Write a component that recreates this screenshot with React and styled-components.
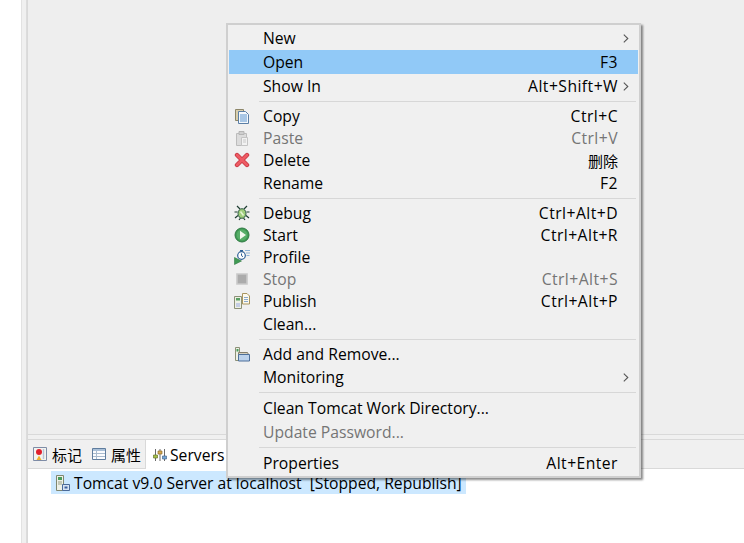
import React from "react";
import styled, { createGlobalStyle } from "styled-components";

const GlobalStyle = createGlobalStyle`
  html, body {
    margin: 0;
    padding: 0;
    background: #fff;
  }
  body {
    font-family: "Open Sans", "Noto Sans CJK SC", sans-serif;
    font-size: 15.7px;
    color: #000;
  }
`;

const Icon = ({ children }) => (
  <svg width="16" height="16" viewBox="0 0 16 16" fill="none">
    {children}
  </svg>
);

const CopyIcon = () => (
  <Icon>
    <path d="M1.5 1.5h8v11h-8z" fill="#d9cfae" stroke="#8d8669" />
    <path d="M4.5 3.5h7l3 3v9h-10z" fill="#f4f8fc" stroke="#5b7fa6" />
    <path d="M6 7h7M6 9h7M6 11h7M6 13h7" stroke="#5d95cf" />
  </Icon>
);

const PasteIcon = () => (
  <Icon>
    <path d="M2.5 3.5h10v12h-10z" fill="#dcdcdc" stroke="#bcbcbc" />
    <path d="M5 1.5h5v3H5z" fill="#cfcfcf" stroke="#b5b5b5" />
    <path d="M7.5 7.5h6v8h-6z" fill="#f2f2f2" stroke="#c4c4c4" />
    <path d="M9 10h3M9 12h3" stroke="#c8c8c8" />
  </Icon>
);

const DeleteIcon = () => (
  <Icon>
    <path d="M3 3l10 10M13 3L3 13" stroke="#c93a45" strokeWidth="4.4" strokeLinecap="round" />
    <path d="M3 3l10 10M13 3L3 13" stroke="#ee5b64" strokeWidth="2.6" strokeLinecap="round" />
  </Icon>
);

const DebugIcon = () => (
  <Icon>
    <path d="M3 1l3 3M13 1l-3 3M0.5 7h3M12.5 7h3M1 13l3-2.5M15 13l-3-2.5M5 15l1.5-2M11 15l-1.5-2" stroke="#1f3d33" strokeWidth="1.2" />
    <ellipse cx="8" cy="8.5" rx="4" ry="4.8" fill="#9fce7c" stroke="#2f5d46" />
    <path d="M6.5 6.5l3 4" stroke="#e3f3d2" strokeWidth="1.6" />
  </Icon>
);

const StartIcon = () => (
  <Icon>
    <circle cx="8" cy="8" r="7" fill="#3f9a53" stroke="#2f7a43" />
    <circle cx="8" cy="8" r="5.4" fill="#57ad68" />
    <path d="M6 3.8L12 8l-6 4.2z" fill="#f2f8ee" />
  </Icon>
);

const ProfileIcon = () => (
  <Icon>
    <path d="M0.5 8.5L7.5 12 0.5 15.5z" fill="#3f9a53" stroke="#2f7a43" strokeWidth="0.6" />
    <circle cx="7.5" cy="6.5" r="3.8" fill="#fff" stroke="#2c5f96" strokeWidth="1.2" />
    <path d="M7.5 4.5v2.2l1.5 1M6 1.5h3" stroke="#2c5f96" />
    <path d="M11 1.5h5M12 4h4M12.5 6.5h3" stroke="#8fb3d6" />
  </Icon>
);

const StopIcon = () => (
  <Icon>
    <path d="M3 3h10v10H3z" fill="#ababab" stroke="#c9c9c9" strokeWidth="1.6" />
  </Icon>
);

const PublishIcon = () => (
  <Icon>
    <path d="M0.5 3.5h7v12h-7z" fill="#eef0e4" stroke="#8c9177" />
    <path d="M2 5h4v2.5H2z" fill="#5aa064" />
    <path d="M2 10h4v4H2z" fill="#c5cde4" />
    <path d="M8.5 0.5h4.5l2.5 2.5v8h-7z" fill="#fdf9ec" stroke="#a8955f" />
    <path d="M10 4.5h4M10 6.5h4M10 8.5h4" stroke="#8aa9cc" />
  </Icon>
);

const AddRemoveIcon = () => (
  <Icon>
    <path d="M1.5 1.5h4v13h-4z" fill="#eef0e4" stroke="#8c9177" />
    <path d="M2.5 3h2v2.5h-2z" fill="#4a9c5c" />
    <path d="M4.5 6.5h9l1 2h-10z" fill="#d5d0c0" stroke="#857f6d" />
    <path d="M4.5 8.5h11v6.5h-11z" fill="#bcd2ec" stroke="#4d6f9a" />
  </Icon>
);

const MarkersIcon = () => (
  <Icon>
    <path d="M1.5 1.5h13v13h-13z" fill="#f3f3ef" stroke="#7e8ca6" />
    <circle cx="7" cy="6" r="3" fill="#e0202c" />
    <path d="M4.5 14L7 9.5 9.5 14z" fill="#f1b22d" />
    <path d="M11.5 3v10" stroke="#b6c4d8" strokeWidth="1.4" />
  </Icon>
);

const PropertiesIcon = () => (
  <Icon>
    <path d="M1.5 2.5h13v11h-13z" fill="#fbfcfe" stroke="#5f7d9e" />
    <path d="M2 3h12v2H2z" fill="#a9c0d8" />
    <path d="M2 7.5h12M2 10.5h12M5.5 5v8" stroke="#a9bbce" />
  </Icon>
);

const ServersIcon = () => (
  <Icon>
    <path d="M3.5 2v12M8 2v12M12.5 2v12" stroke="#6a6a6a" />
    <path d="M1.5 8h4v3h-4z" fill="#a5bf48" stroke="#67762b" strokeWidth="0.7" />
    <path d="M6 4h4v3H6z" fill="#d8a94d" stroke="#8a6c2c" strokeWidth="0.7" />
    <path d="M10.5 9h4v3h-4z" fill="#74a6d8" stroke="#45698f" strokeWidth="0.7" />
  </Icon>
);

const TomcatIcon = () => (
  <Icon>
    <path d="M0.5 0.5h7v15h-7z" fill="#eef0e8" stroke="#80866f" />
    <path d="M2 2h4v3H2z" fill="#4a9c5c" />
    <path d="M2 7h4M2 9h4" stroke="#9aa088" />
    <path d="M6.5 9.5h7v6h-7z" fill="#d7e3f3" stroke="#4a6a9a" />
    <path d="M8.5 11.5h3v2h-3z" fill="#3a5f9e" />
  </Icon>
);

const Chevron = () => (
  <svg width="6" height="9" viewBox="0 0 6 9" fill="none">
    <path d="M0.8 0.6L4.8 4.5 0.8 8.4" stroke="#555" strokeWidth="1.1" />
  </svg>
);

const menuGroups = [
  [
    { label: "New", submenu: true },
    { label: "Open", shortcut: "F3", active: true },
    { label: "Show In", shortcut: "Alt+Shift+W", submenu: true },
  ],
  [
    { label: "Copy", shortcut: "Ctrl+C", icon: CopyIcon },
    { label: "Paste", shortcut: "Ctrl+V", icon: PasteIcon, disabled: true },
    { label: "Delete", shortcut: "删除", icon: DeleteIcon, cjk: true },
    { label: "Rename", shortcut: "F2" },
  ],
  [
    { label: "Debug", shortcut: "Ctrl+Alt+D", icon: DebugIcon },
    { label: "Start", shortcut: "Ctrl+Alt+R", icon: StartIcon },
    { label: "Profile", icon: ProfileIcon },
    { label: "Stop", shortcut: "Ctrl+Alt+S", icon: StopIcon, disabled: true },
    { label: "Publish", shortcut: "Ctrl+Alt+P", icon: PublishIcon },
    { label: "Clean..." },
  ],
  [
    { label: "Add and Remove...", icon: AddRemoveIcon },
    { label: "Monitoring", submenu: true },
  ],
  [
    { label: "Clean Tomcat Work Directory..." },
    { label: "Update Password...", disabled: true },
  ],
  [{ label: "Properties", shortcut: "Alt+Enter" }],
];

export default function App() {
  return (
    <Page>
      <GlobalStyle />
      <Strip />
      <Workbench>
        <EditorArea />
        <ViewPanel>
          <TabBar>
            <InactiveTabs>
              <Tab>
                <MarkersIcon />
                <TabLabel>标记</TabLabel>
              </Tab>
              <Tab>
                <PropertiesIcon />
                <TabLabel>属性</TabLabel>
              </Tab>
            </InactiveTabs>
            <ActiveTab>
              <ServersIcon />
              <span>Servers</span>
            </ActiveTab>
          </TabBar>
          <TreeRow>
            <TomcatIcon />
            <span>Tomcat v9.0 Server at localhost  [Stopped, Republish]</span>
          </TreeRow>
        </ViewPanel>
      </Workbench>

      <Menu>
        {menuGroups.map((group, i) => (
          <React.Fragment key={i}>
            {i > 0 && <Separator />}
            {group.map((item) => (
              <MenuRow
                key={item.label}
                $active={item.active}
                $disabled={item.disabled}
                $hasIcon={!!item.icon}
              >
                <IconSlot>{item.icon && <item.icon />}</IconSlot>
                <Label>{item.label}</Label>
                <Shortcut $cjk={item.cjk}>{item.shortcut}</Shortcut>
                <ArrowSlot>{item.submenu && <Chevron />}</ArrowSlot>
              </MenuRow>
            ))}
          </React.Fragment>
        ))}
      </Menu>
    </Page>
  );
}

const Page = styled.div`
  position: relative;
  width: 744px;
  height: 543px;
  padding-left: 21px;
  box-sizing: border-box;
  display: flex;
  overflow: hidden;
  background: #fff;
`;

const Strip = styled.div`
  width: 6px;
  box-sizing: border-box;
  background: #f0f0f0;
  border-left: 1px solid #e2e2e2;
  border-right: 1px solid #dcdcdc;
`;

const Workbench = styled.div`
  flex: 1;
  display: flex;
  flex-direction: column;
  background: #f0f0f0;
  border-left: 1px solid #d9d9d9;
`;

const EditorArea = styled.div`
  height: 434px;
  flex: none;
  background: #eeeeee;
  border-bottom: 1px solid #d9d9d9;
`;

const ViewPanel = styled.div`
  flex: 1;
  margin-top: 4px;
  background: #fff;
  border-top: 1px solid #d9d9d9;
`;

const TabBar = styled.div`
  height: 29px;
  box-sizing: border-box;
  display: flex;
  background: #f0f0f0;
  border-bottom: 1px solid #d9d9d9;
`;

const InactiveTabs = styled.div`
  width: 118px;
  box-sizing: border-box;
  display: flex;
  gap: 9px;
  padding-left: 4px;
  border-right: 1px solid #d9d9d9;
`;

const Tab = styled.div`
  display: flex;
  align-items: center;
  gap: 4px;
  white-space: nowrap;
`;

const TabLabel = styled.span`
  font-size: 15px;
`;

const ActiveTab = styled(Tab)`
  width: 200px;
  height: 29px;
  padding-left: 6px;
  gap: 2px;
  box-sizing: border-box;
  background: #fff;
`;

const TreeRow = styled.div`
  display: flex;
  align-items: center;
  gap: 2px;
  width: 415px;
  height: 23px;
  box-sizing: border-box;
  margin: 2px 0 0 23px;
  padding-left: 5px;
  background: #cce8ff;
  white-space: pre;
`;

const Menu = styled.div`
  position: absolute;
  left: 226px;
  top: 23px;
  width: 415px;
  height: 455px;
  box-sizing: border-box;
  padding: 1px;
  background: #f0f0f0;
  border: 2px solid #cfcfcf;
  box-shadow: 2px 2px 2px rgba(0, 0, 0, 0.45);
`;

const MenuRow = styled.div`
  display: flex;
  align-items: center;
  height: ${(p) => (p.$hasIcon ? "22px" : "24px")};
  background: ${(p) => (p.$active ? "#91c9f7" : "transparent")};
  color: ${(p) => (p.$disabled ? "#757575" : "#000")};
`;

const IconSlot = styled.div`
  width: 34px;
  flex: none;
  display: flex;
  align-items: center;
  padding-left: 5px;
  box-sizing: border-box;
`;

const Label = styled.span`
  flex: 1;
  white-space: nowrap;
`;

const Shortcut = styled.span`
  white-space: nowrap;
  letter-spacing: ${(p) => (p.$cjk ? "0" : "0.45px")};
  font-size: ${(p) => (p.$cjk ? "15px" : "inherit")};
`;

const ArrowSlot = styled.div`
  width: 20px;
  flex: none;
  display: flex;
  align-items: center;
  padding-left: 5px;
  box-sizing: border-box;
`;

const Separator = styled.div`
  height: 1px;
  margin: 3px 2px 3px 30px;
  background: #d7d7d7;
`;
